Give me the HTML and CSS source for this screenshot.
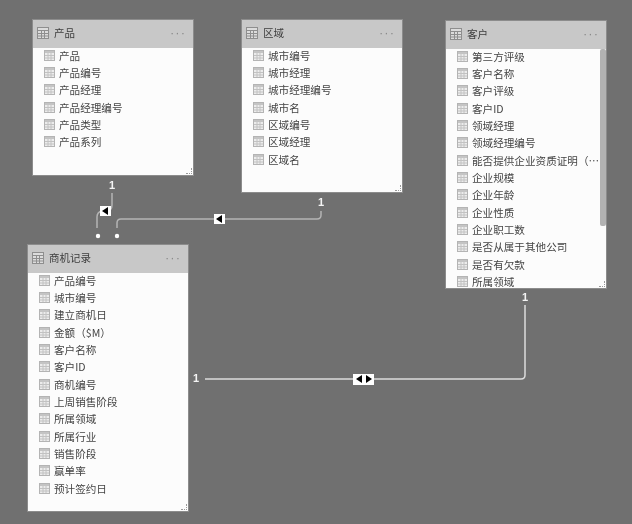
FILE: index.html
```html
<!DOCTYPE html>
<html lang="zh">
<head>
<meta charset="utf-8">
<title>模型视图</title>
<link rel="stylesheet" href="styles.css">
</head>
<body>
<svg class="defs" width="0" height="0" aria-hidden="true">
  <symbol id="tbl" viewBox="0 0 11 11">
    <rect x="0.5" y="0.5" width="10" height="10" fill="#ececec" stroke="#b4b4b4"/>
    <rect x="1" y="1" width="9" height="2" fill="#c4c4c4"/>
    <path d="M1 5.5H10M1 8H10M4 3V10M7 3V10" stroke="#c2c2c2" fill="none"/>
  </symbol>
  <symbol id="tblh" viewBox="0 0 12 12">
    <rect x="0.5" y="0.5" width="11" height="11" fill="#dcdcdc" stroke="#8e8e8e"/>
    <path d="M1 3.5H11M1 6.5H11M1 9H11M4.5 3V11M7.5 3V11" stroke="#8e8e8e" fill="none"/>
  </symbol>
</svg>
<main class="canvas">
  <section class="card card-product">
    <header class="head"><svg class="hicon"><use href="#tblh"/></svg><span class="title">产品</span><span class="more">···</span></header>
    <ul class="fields">
      <li><svg class="ficon"><use href="#tbl"/></svg><span class="fname">产品</span></li>
      <li><svg class="ficon"><use href="#tbl"/></svg><span class="fname">产品编号</span></li>
      <li><svg class="ficon"><use href="#tbl"/></svg><span class="fname">产品经理</span></li>
      <li><svg class="ficon"><use href="#tbl"/></svg><span class="fname">产品经理编号</span></li>
      <li><svg class="ficon"><use href="#tbl"/></svg><span class="fname">产品类型</span></li>
      <li><svg class="ficon"><use href="#tbl"/></svg><span class="fname">产品系列</span></li>
    </ul>
    <i class="grip"></i>
  </section>

  <section class="card card-region">
    <header class="head"><svg class="hicon"><use href="#tblh"/></svg><span class="title">区域</span><span class="more">···</span></header>
    <ul class="fields">
      <li><svg class="ficon"><use href="#tbl"/></svg><span class="fname">城市编号</span></li>
      <li><svg class="ficon"><use href="#tbl"/></svg><span class="fname">城市经理</span></li>
      <li><svg class="ficon"><use href="#tbl"/></svg><span class="fname">城市经理编号</span></li>
      <li><svg class="ficon"><use href="#tbl"/></svg><span class="fname">城市名</span></li>
      <li><svg class="ficon"><use href="#tbl"/></svg><span class="fname">区域编号</span></li>
      <li><svg class="ficon"><use href="#tbl"/></svg><span class="fname">区域经理</span></li>
      <li><svg class="ficon"><use href="#tbl"/></svg><span class="fname">区域名</span></li>
    </ul>
    <i class="grip"></i>
  </section>

  <section class="card card-customer">
    <header class="head"><svg class="hicon"><use href="#tblh"/></svg><span class="title">客户</span><span class="more">···</span></header>
    <ul class="fields fields-scroll">
      <li><svg class="ficon"><use href="#tbl"/></svg><span class="fname">第三方评级</span></li>
      <li><svg class="ficon"><use href="#tbl"/></svg><span class="fname">客户名称</span></li>
      <li><svg class="ficon"><use href="#tbl"/></svg><span class="fname">客户评级</span></li>
      <li><svg class="ficon"><use href="#tbl"/></svg><span class="fname">客户ID</span></li>
      <li><svg class="ficon"><use href="#tbl"/></svg><span class="fname">领域经理</span></li>
      <li><svg class="ficon"><use href="#tbl"/></svg><span class="fname">领域经理编号</span></li>
      <li><svg class="ficon"><use href="#tbl"/></svg><span class="fname">能否提供企业资质证明（是/否）</span></li>
      <li><svg class="ficon"><use href="#tbl"/></svg><span class="fname">企业规模</span></li>
      <li><svg class="ficon"><use href="#tbl"/></svg><span class="fname">企业年龄</span></li>
      <li><svg class="ficon"><use href="#tbl"/></svg><span class="fname">企业性质</span></li>
      <li><svg class="ficon"><use href="#tbl"/></svg><span class="fname">企业职工数</span></li>
      <li><svg class="ficon"><use href="#tbl"/></svg><span class="fname">是否从属于其他公司</span></li>
      <li><svg class="ficon"><use href="#tbl"/></svg><span class="fname">是否有欠款</span></li>
      <li><svg class="ficon"><use href="#tbl"/></svg><span class="fname">所属领域</span></li>
    </ul>
    <i class="scrollbar"></i>
    <i class="grip"></i>
  </section>

  <section class="card card-deals">
    <header class="head"><svg class="hicon"><use href="#tblh"/></svg><span class="title">商机记录</span><span class="more">···</span></header>
    <ul class="fields">
      <li><svg class="ficon"><use href="#tbl"/></svg><span class="fname">产品编号</span></li>
      <li><svg class="ficon"><use href="#tbl"/></svg><span class="fname">城市编号</span></li>
      <li><svg class="ficon"><use href="#tbl"/></svg><span class="fname">建立商机日</span></li>
      <li><svg class="ficon"><use href="#tbl"/></svg><span class="fname">金额（$M）</span></li>
      <li><svg class="ficon"><use href="#tbl"/></svg><span class="fname">客户名称</span></li>
      <li><svg class="ficon"><use href="#tbl"/></svg><span class="fname">客户ID</span></li>
      <li><svg class="ficon"><use href="#tbl"/></svg><span class="fname">商机编号</span></li>
      <li><svg class="ficon"><use href="#tbl"/></svg><span class="fname">上周销售阶段</span></li>
      <li><svg class="ficon"><use href="#tbl"/></svg><span class="fname">所属领域</span></li>
      <li><svg class="ficon"><use href="#tbl"/></svg><span class="fname">所属行业</span></li>
      <li><svg class="ficon"><use href="#tbl"/></svg><span class="fname">销售阶段</span></li>
      <li><svg class="ficon"><use href="#tbl"/></svg><span class="fname">赢单率</span></li>
      <li><svg class="ficon"><use href="#tbl"/></svg><span class="fname">预计签约日</span></li>
    </ul>
    <i class="grip"></i>
  </section>

  <svg class="links" width="632" height="524" viewBox="0 0 632 524">
    <g fill="none" stroke="#b4b4b4" stroke-width="1.5">
      <path d="M112 193V205Q112 211 106 211H102Q97 212 97 217V228"/>
      <path d="M321 211V215Q321 219 317 219H121Q117 219 117 223V228"/>
    </g>
    <path d="M205 379H521Q525 379 525 375V305" fill="none" stroke="#dcdcdc" stroke-width="1.5"/>
    <circle cx="98" cy="236" r="2.2" fill="#fff"/>
    <circle cx="117" cy="236" r="2.2" fill="#fff"/>
    <rect x="100" y="206" width="11" height="10" fill="#fff"/>
    <path d="M102 211L108 207V215Z" fill="#000"/>
    <rect x="214" y="214" width="11" height="10" fill="#fff"/>
    <path d="M216 219L222 215V223Z" fill="#000"/>
    <rect x="353" y="374" width="21" height="11" fill="#fff"/>
    <path d="M356 379L362 375V383ZM372 379L366 375V383Z" fill="#000"/>
  </svg>

  <span class="card-one one-a">1</span>
  <span class="card-one one-b">1</span>
  <span class="card-one one-c">1</span>
  <span class="card-one one-d">1</span>
</main>
</body>
</html>
```

FILE: styles.css
```css
* { box-sizing: border-box; }
html, body { margin: 0; padding: 0; }
body { width: 632px; height: 524px; overflow: hidden; background: #707070; }
.defs { position: absolute; }
.canvas {
  position: relative;
  width: 632px;
  height: 524px;
  background: #707070;
  font-family: "Noto Sans CJK SC", "Liberation Sans", sans-serif;
  filter: blur(0.65px);
}
.card {
  position: absolute;
  width: 160px;
  display: flex;
  flex-direction: column;
  background: #fcfcfc;
  box-shadow: 0 0 0 1px #8c8c8c;
  overflow: hidden;
}
.card-product { left: 33px; top: 20px; height: 155px; }
.card-region { left: 242px; top: 20px; height: 172px; }
.card-customer { left: 446px; top: 21px; height: 267px; }
.card-deals { left: 28px; top: 245px; height: 266px; }
.head {
  flex: none;
  height: 28px;
  display: flex;
  align-items: center;
  gap: 5px;
  padding: 0 7px 2px 4px;
  background: #c8c8c8;
}
.hicon { width: 12px; height: 12px; flex: none; }
.title { flex: 1; font-size: 10.5px; line-height: 14px; color: #3c3c3c; }
.more { font-family: "Liberation Sans", sans-serif; font-size: 13px; letter-spacing: 1px; line-height: 14px; color: #8a8a8a; }
.fields {
  flex: 1;
  min-height: 0;
  margin: -1.5px 0 0;
  padding: 0 14px 0 11px;
  list-style: none;
  overflow: hidden;
}
.fields-scroll { padding-right: 5px; }
.fields li {
  height: 17.35px;
  display: flex;
  align-items: center;
  gap: 4px;
  color: #444;
  font-size: 10.6px;
  white-space: nowrap;
}
.ficon { width: 11px; height: 11px; flex: none; }
.fname { min-width: 0; overflow: hidden; text-overflow: ellipsis; }
.scrollbar {
  position: absolute;
  right: 0;
  top: 28px;
  width: 6px;
  height: 177px;
  background: #b2b2b2;
  border-radius: 2px;
}
.grip {
  position: absolute;
  right: 1px;
  bottom: 1px;
  width: 6px;
  height: 6px;
  border-right: 1px dotted #9a9a9a;
  border-bottom: 1px dotted #9a9a9a;
}
.links { position: absolute; left: 0; top: 0; }
.card-one {
  position: absolute;
  font-family: "Liberation Sans", sans-serif;
  font-size: 11px;
  font-weight: 700;
  line-height: 12px;
  color: #f4f4f4;
}
.one-a { left: 109px; top: 179px; }
.one-b { left: 318px; top: 196px; }
.one-c { left: 522px; top: 291px; }
.one-d { left: 193px; top: 372px; }
```
